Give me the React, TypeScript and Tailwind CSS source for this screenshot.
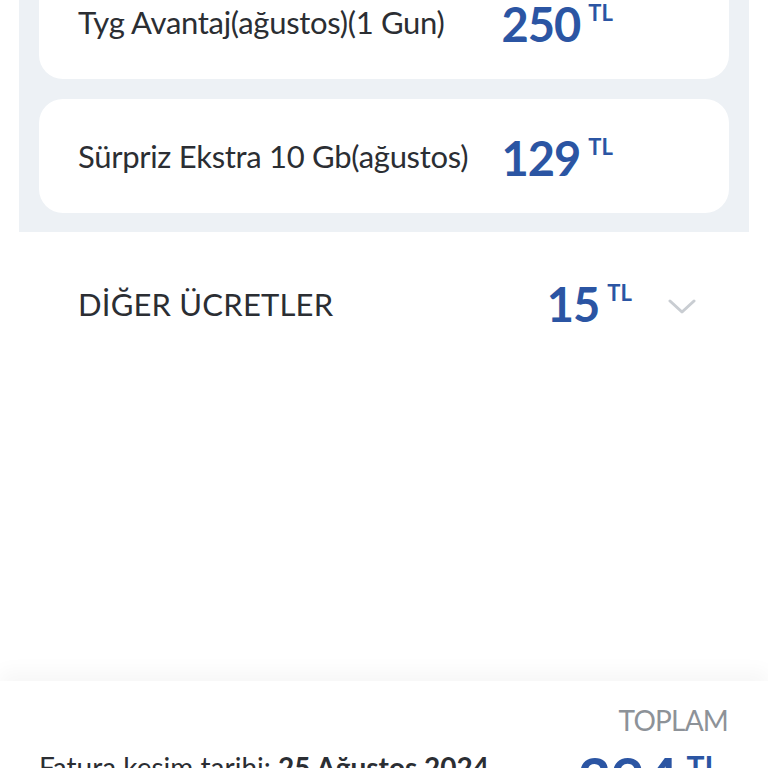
import React from "react";

const font = { fontFamily: "Lato, 'Open Sans', sans-serif" };

function Price({ value }: { value: string }) {
  return (
    <div className="flex items-start">
      <span className="text-[47px] font-bold leading-none text-[#2b55a3] tracking-[-1px]">{value}</span>
      <span className="ml-[8px] mt-[1px] text-[22px] font-bold leading-none text-[#2b55a3]">TL</span>
    </div>
  );
}

function Card({ title, price }: { title: string; price: string }) {
  return (
    <div className="h-[114px] rounded-[24px] bg-white flex items-center justify-between pl-[39px] pr-[116px]">
      <span className="text-[31px] text-[#2b2e33] tracking-[-0.3px] leading-none">{title}</span>
      <div className="mt-[4px]">
        <Price value={price} />
      </div>
    </div>
  );
}

export default function App() {
  return (
    <div className="relative w-[768px] h-[768px] overflow-hidden bg-white" style={font}>
      <div className="mx-[19px] -mt-[55px] bg-[#edf1f5] px-[20px] pt-[20px] pb-[19px] flex flex-col gap-[20px]">
        <Card title="Tyg Avantaj(ağustos)(1 Gun)" price="250" />
        <Card title="Sürpriz Ekstra 10 Gb(ağustos)" price="129" />
      </div>
      <div className="h-[138px] flex items-center pl-[78px] pr-[72px] pt-[6px]">
        <span className="flex-1 text-[31px] text-[#2b2e33] tracking-[0.2px] leading-none">DİĞER ÜCRETLER</span>
        <Price value="15" />
        <svg className="ml-[36px] mt-[6px]" width="28" height="16" viewBox="0 0 28 16" fill="none">
          <path d="M2 2 L14 13 L26 2" stroke="#c9cdd2" strokeWidth="3" strokeLinecap="round" strokeLinejoin="round" />
        </svg>
      </div>
      <div className="absolute left-0 right-0 top-[681px] bottom-0 bg-white shadow-[0_-10px_18px_rgba(0,0,0,0.035)]">
        <div className="flex justify-end pr-[40px] pt-[25px]">
          <span className="text-[28px] text-[#8d9298] tracking-[-0.8px] leading-none">TOPLAM</span>
        </div>
        <div className="flex items-start justify-between pl-[39px] pr-[48px] mt-[15px]">
          <span className="mt-[4px] text-[28px] text-[#2b2e33] leading-none">
            Fatura kesim tarihi: <span className="font-bold">25 Ağustos 2024</span>
          </span>
          <div className="flex items-start">
            <span className="text-[58px] font-bold leading-none text-[#2b55a3]">394</span>
            <span className="ml-[8px] mt-[2px] text-[30px] font-bold leading-none text-[#2b55a3]">TL</span>
          </div>
        </div>
      </div>
    </div>
  );
}
